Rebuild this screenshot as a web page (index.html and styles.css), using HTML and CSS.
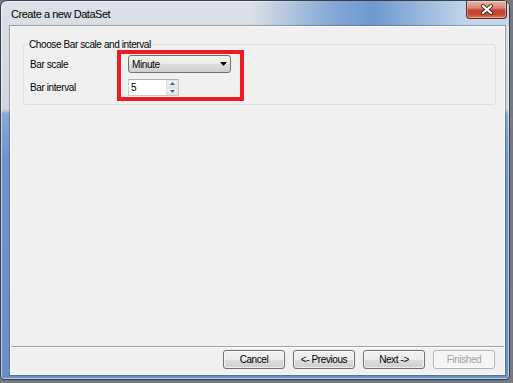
FILE: index.html
```html
<!DOCTYPE html>
<html lang="en">
<head>
    <meta charset="UTF-8">
    <title>Create a new DataSet</title>
    <link rel="stylesheet" href="styles.css">
</head>
<body>
    <div class="window">
        <div class="titlebar">
            <span class="title">Create a new DataSet</span>
            <div class="close-btn">
                <svg width="14" height="11" viewBox="0 0 14 11">
                    <path d="M3 2 L11 9 M11 2 L3 9" stroke="#3b2a2a" stroke-width="4" stroke-linecap="round"/>
                    <path d="M3 2 L11 9 M11 2 L3 9" stroke="#ffffff" stroke-width="2.2" stroke-linecap="round"/>
                </svg>
            </div>
        </div>

        <div class="client">
            <fieldset class="group">
                <legend>Choose Bar scale and interval</legend>
                <div class="row">
                    <label>Bar scale</label>
                    <div class="combo">
                        <span>Minute</span>
                        <svg width="7" height="4" viewBox="0 0 7 4"><path d="M0 0 H7 L3.5 4 Z" fill="#000"/></svg>
                    </div>
                </div>
                <div class="row">
                    <label>Bar interval</label>
                    <div class="numeric">
                        <span>5</span>
                        <div class="spin">
                            <div class="spin-btn">
                                <svg width="5" height="3" viewBox="0 0 5 3"><path d="M0 3 H5 L2.5 0 Z" fill="#4a5f80"/></svg>
                            </div>
                            <div class="spin-btn">
                                <svg width="5" height="3" viewBox="0 0 5 3"><path d="M0 0 H5 L2.5 3 Z" fill="#4a5f80"/></svg>
                            </div>
                        </div>
                    </div>
                </div>
            </fieldset>

            <div class="footer">
                <button class="btn">Cancel</button>
                <button class="btn">&lt;- Previous</button>
                <button class="btn">Next -&gt;</button>
                <button class="btn" disabled>Finished</button>
            </div>
        </div>
    </div>

    <!-- marca vermelha da captura -->
    <div class="highlight"></div>
</body>
</html>
```

FILE: styles.css
```css
body {
    margin: 0;
    width: 513px;
    height: 383px;
    overflow: hidden;
    background-color: #767a80;
    font-family: "Liberation Sans", Arial, sans-serif;
    font-size: 10px;
    letter-spacing: -0.4px;
    color: #000;
    position: relative;
}
.window {
    box-sizing: border-box;
    width: 510px;
    height: 380px;
    border: 1px solid #3a4049;
    border-radius: 7px 7px 4px 4px;
    background: linear-gradient(180deg, #dce1e7 0, #cfd6de 108px, #86a9d6 113px, #6c95cc 160px, #6790c9 100%);
    box-shadow: inset 0 0 0 1px rgba(255,255,255,0.55);
    display: flex;
    flex-direction: column;
    padding-bottom: 4px;
}
.titlebar {
    height: 25px;
    display: flex;
    justify-content: space-between;
    align-items: flex-start;
    padding: 0 2px 0 10px;
    border-radius: 6px 6px 0 0;
    background: linear-gradient(90deg, rgba(220,226,232,0) 0, rgba(216,222,230,0) 250px, #86a9d6 330px, #6e99cf 372px, #abc4e2 440px, #c7d7ea 470px);
}
.title {
    font-size: 11px;
    letter-spacing: -0.45px;
    line-height: 26px;
    color: #000;
}
.close-btn {
    width: 41px;
    height: 18px;
    box-sizing: border-box;
    border: 1px solid #5a2a24;
    border-top: none;
    border-radius: 0 0 4px 4px;
    background: linear-gradient(180deg, #e8b4a8 0, #d98a78 40%, #c2422c 55%, #c94a30 80%, #df7a5c 100%);
    box-shadow: inset 0 0 0 1px rgba(255,255,255,0.35);
    display: flex;
    align-items: center;
    justify-content: center;
}
.client {
    flex: 1;
    margin: 0 4px 0 9px;
    background-color: #f0f0f0;
    border: 1px solid #fdfdfd;
    box-shadow: 0 0 0 1px rgba(60,80,100,0.45);
    display: flex;
    flex-direction: column;
}
.group {
    margin: 11px 8px 0 12px;
    padding: 4px 6px 8px 6px;
    border: 1px solid #d5dfe5;
    border-radius: 3px;
    min-width: 0;
}
.group legend {
    padding: 0 1px;
    margin-left: -2px;
    line-height: 13px;
}
.row {
    display: flex;
    align-items: center;
}
.row + .row {
    margin-top: 6px;
}
.row label {
    width: 98px;
}
.combo {
    box-sizing: border-box;
    width: 103px;
    height: 18px;
    border: 1px solid #707070;
    border-radius: 3px;
    background: linear-gradient(180deg, #f3f3f3 0, #ebebeb 50%, #dddddd 51%, #cfcfcf 100%);
    display: flex;
    align-items: center;
    justify-content: space-between;
    padding: 0 3px 0 3px;
}
.numeric {
    box-sizing: border-box;
    width: 51px;
    height: 17px;
    border: 1px solid #c5cbd3;
    border-top-color: #abadb3;
    background-color: #fff;
    display: flex;
    justify-content: space-between;
    padding-left: 2px;
    line-height: 15px;
}
.spin {
    width: 12px;
    display: flex;
    flex-direction: column;
}
.spin-btn {
    flex: 1;
    border: 1px solid #dfe3e8;
    background: linear-gradient(180deg, #f6f7f9 0, #e3e6ea 100%);
    display: flex;
    align-items: center;
    justify-content: center;
}
.footer {
    margin-top: auto;
    border-top: 1px solid #a0a0a0;
    box-shadow: inset 0 1px #ffffff;
    padding: 3px 9px 5px 0;
    display: flex;
    justify-content: flex-end;
    gap: 8px;
}
.btn {
    width: 62px;
    height: 19px;
    padding: 0;
    font-family: inherit;
    font-size: 10px;
    letter-spacing: -0.4px;
    color: #000;
    border: 1px solid #707070;
    border-radius: 3px;
    background: linear-gradient(180deg, #f2f2f2 0, #ebebeb 50%, #dddddd 51%, #cfcfcf 100%);
    box-shadow: inset 0 0 0 1px rgba(255,255,255,0.6);
}
.btn:disabled {
    color: #a3a3a3;
    border-color: #adb2b5;
    background: #f4f4f4;
}
.highlight {
    position: absolute;
    left: 117px;
    top: 50px;
    width: 119px;
    height: 43px;
    border: 4px solid #ec1c24;
}
```
